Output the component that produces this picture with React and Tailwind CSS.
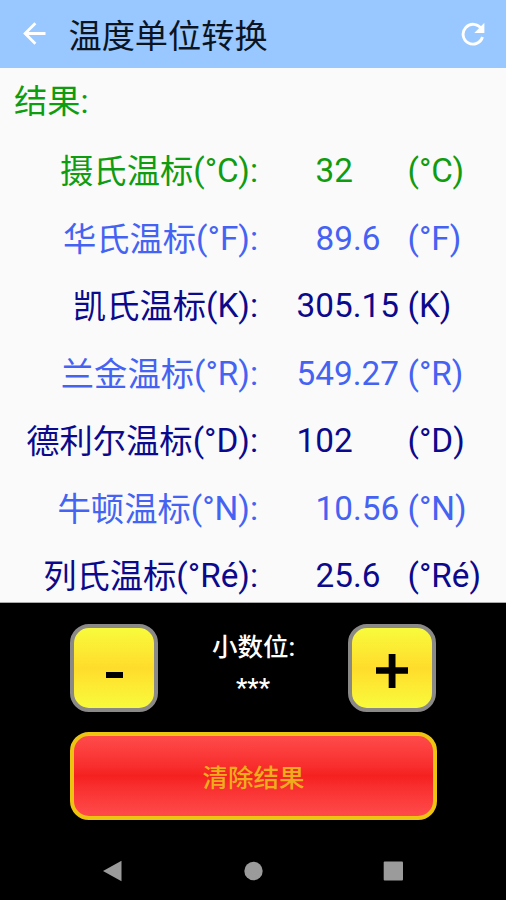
const rows = [
  { label: '摄氏温标', suffix: '(°C):', value: '32', unit: '(°C)', color: 'text-[#109c10]', pad: 'pl-[19px]' },
  { label: '华氏温标', suffix: '(°F):', value: '89.6', unit: '(°F)', color: 'text-[#4563f2]', pad: 'pl-[19px]' },
  { label: '凯氏温标', suffix: '(K):', value: '305.15', unit: '(K)', color: 'text-[#0c0a8c]', pad: 'pl-0' },
  { label: '兰金温标', suffix: '(°R):', value: '549.27', unit: '(°R)', color: 'text-[#4563f2]', pad: 'pl-0' },
  { label: '德利尔温标', suffix: '(°D):', value: '102', unit: '(°D)', color: 'text-[#0c0a8c]', pad: 'pl-0' },
  { label: '牛顿温标', suffix: '(°N):', value: '10.56', unit: '(°N)', color: 'text-[#4563f2]', pad: 'pl-[19px]' },
  { label: '列氏温标', suffix: '(°Ré):', value: '25.6', unit: '(°Ré)', color: 'text-[#0c0a8c]', pad: 'pl-[19px]' },
];

function StepButton({ children }) {
  return (
    <button className="flex h-[88px] w-[88px] items-center justify-center rounded-[19px] border-4 border-[#8b8888] bg-linear-to-b from-[#f8fb3c] via-[#ffdc2b] to-[#f8fb3c]">
      {children}
    </button>
  );
}

export default function App() {
  return (
    <div className="flex h-[900px] w-[506px] flex-col overflow-hidden bg-[#fafafa] font-['Roboto','Noto_Sans_CJK_SC',sans-serif]">
      <header className="flex h-[67.5px] shrink-0 items-center bg-[#99c7ff] pl-[23px] pr-[21px]">
        <svg className="h-[23px] w-[23px]" viewBox="0 0 23 23" fill="none" stroke="white" strokeWidth="2.8">
          <path d="M22.5 11.5H2.5M12.4 1.2L2.1 11.5L12.4 21.8" />
        </svg>
        <h1 className="ml-[22.5px] grow whitespace-nowrap pt-[6px] text-[33.2px] leading-[68px] text-[#0b1522]">温度单位转换</h1>
        <svg className="h-[24px] w-[24px]" viewBox="0 0 24 24" fill="none">
          <path d="M20.3 6.8A9.9 9.9 0 1 0 21.5 15" stroke="white" strokeWidth="2.9" />
          <path d="M23.4 .8V10.9H13.3Z" fill="white" />
        </svg>
      </header>

      <main className="h-[535px] shrink-0 overflow-hidden border-b border-[#aaa] text-[33.3px]">
        <div className="pl-[14px] leading-[67.5px] text-[#109c10]">结果:</div>
        {rows.map((r) => (
          <div key={r.label} className={`flex h-[67.5px] whitespace-nowrap leading-[72px] ${r.color}`}>
            <div className="flex w-[258px] justify-end">
              <span className="pt-px">{r.label}</span>
              <span>{r.suffix}</span>
            </div>
            <div className={`ml-[38.5px] w-[111px] ${r.pad}`}>{r.value}</div>
            <div>{r.unit}</div>
          </div>
        ))}
      </main>

      <section className="flex grow flex-col bg-black px-[70px] pt-[21px]">
        <div className="flex justify-between">
          <StepButton>
            <span className="mt-[15px] h-[6.5px] w-[17px] bg-black" />
          </StepButton>
          <div className="text-center text-[25.5px] font-medium leading-[41px] text-white">
            <div className="pl-px pt-[3px]">小数位:</div>
            <div>***</div>
          </div>
          <StepButton>
            <svg className="mt-[6px] h-[34px] w-[32px]" viewBox="0 0 32 34" fill="black">
              <path d="M12.7 0H19.5V13.2H32V19.7H19.5V34H12.7V19.7H0V13.2H12.7Z" />
            </svg>
          </StepButton>
        </div>
        <button className="mt-[20px] h-[88px] w-[367px] rounded-[19px] border-4 border-[#edc511] bg-linear-to-b from-[#ff4a4a] via-[#f52020] to-[#ff4a4a] pt-[5px] text-[25.5px] font-medium text-[#efad1c]">
          清除结果
        </button>
        <nav className="flex h-[60px] items-center pt-[1px]">
          <svg className="mt-[42px] h-[22px] w-[366px] shrink-0" viewBox="0 0 366 22" fill="#9b9b9b">
            <path d="M33 11L51.5 .7V21.3Z" />
            <circle cx="183.5" cy="11" r="9.2" />
            <rect x="313.7" y="1.5" width="19.3" height="19" rx="1" />
          </svg>
        </nav>
      </section>
    </div>
  );
}
